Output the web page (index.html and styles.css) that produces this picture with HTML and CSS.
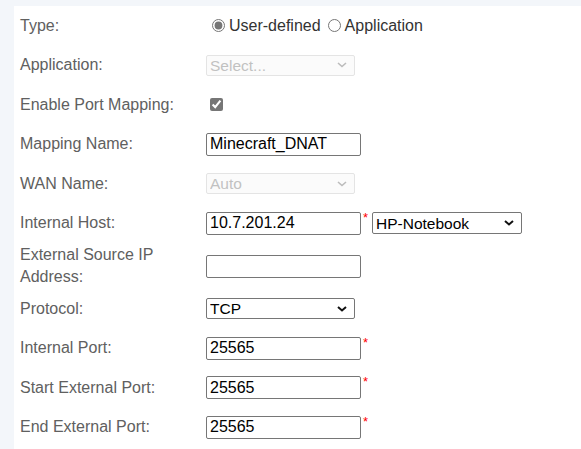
FILE: index.html
```html
<!DOCTYPE html>
<html lang="en">
<head>
    <meta charset="UTF-8">
    <meta name="viewport" content="width=device-width, initial-scale=1.0">
    <title>Port Mapping</title>
    <link rel="stylesheet" href="styles.css">
</head>
<body>
    <div class="panel">
        <form class="form-grid">
            <div class="row">
                <label class="field-label">Type:</label>
                <div class="field">
                    <label class="radio"><input type="radio" name="type" checked>User-defined</label>
                    <label class="radio"><input type="radio" name="type">Application</label>
                </div>
            </div>

            <div class="row">
                <label class="field-label">Application:</label>
                <div class="field">
                    <select class="select" disabled>
                        <option>Select...</option>
                    </select>
                </div>
            </div>

            <div class="row">
                <label class="field-label">Enable Port Mapping:</label>
                <div class="field">
                    <input type="checkbox" class="check" checked>
                </div>
            </div>

            <div class="row">
                <label class="field-label">Mapping Name:</label>
                <div class="field">
                    <input type="text" class="text" value="Minecraft_DNAT">
                </div>
            </div>

            <div class="row">
                <label class="field-label">WAN Name:</label>
                <div class="field">
                    <select class="select" disabled>
                        <option>Auto</option>
                    </select>
                </div>
            </div>

            <div class="row">
                <label class="field-label">Internal Host:</label>
                <div class="field">
                    <input type="text" class="text" value="10.7.201.24"><span class="req">*</span>
                    <select class="select host-select">
                        <option>HP-Notebook</option>
                    </select>
                </div>
            </div>

            <div class="row row-tall">
                <label class="field-label">External Source IP Address:</label>
                <div class="field">
                    <input type="text" class="text">
                </div>
            </div>

            <div class="row">
                <label class="field-label">Protocol:</label>
                <div class="field">
                    <select class="select">
                        <option>TCP</option>
                        <option>UDP</option>
                        <option>ALL</option>
                    </select>
                </div>
            </div>

            <div class="row">
                <label class="field-label">Internal Port:</label>
                <div class="field">
                    <input type="text" class="text" value="25565"><span class="req">*</span>
                </div>
            </div>

            <div class="row">
                <label class="field-label">Start External Port:</label>
                <div class="field">
                    <input type="text" class="text" value="25565"><span class="req">*</span>
                </div>
            </div>

            <div class="row">
                <label class="field-label">End External Port:</label>
                <div class="field">
                    <input type="text" class="text" value="25565"><span class="req">*</span>
                </div>
            </div>
        </form>
    </div>
</body>
</html>
```

FILE: styles.css
```css
html, body {
    margin: 0;
    height: 100%;
}
body {
    font-family: "Liberation Sans", Arial, sans-serif;
    font-size: 16px;
    background-color: #f3f6fa;
    overflow: hidden;
}
.panel {
    margin: 6px 0 0 14px;
    padding-left: 6px;
    background: white;
    height: calc(100% - 6px);
}
.form-grid {
    margin: 0;
}
.row {
    display: flex;
    align-items: center;
    height: 39.5px;
}
.row-tall {
    height: 46px;
}
.field-label {
    width: 186px;
    flex-shrink: 0;
    color: #606060;
    line-height: 22px;
    padding-right: 30px;
    box-sizing: border-box;
}
.field {
    display: flex;
    align-items: center;
}
.radio {
    display: flex;
    align-items: center;
    color: #333;
    margin-right: 1px;
}
.radio input {
    margin: 0 4px 0 6px;
    width: 13px;
    height: 13px;
    accent-color: #767676;
}
.check {
    margin: 0 0 0 4px;
    width: 13px;
    height: 13px;
    accent-color: #767676;
}
.text {
    width: 155px;
    height: 23px;
    box-sizing: border-box;
    border: 1px solid #767676;
    border-radius: 2px;
    padding: 1px 3px;
    font-family: inherit;
    font-size: 16px;
    color: #000;
    margin: 0;
    outline: none;
}
.select {
    appearance: none;
    -webkit-appearance: none;
    width: 149px;
    height: 21px;
    box-sizing: border-box;
    border: 1px solid #767676;
    border-radius: 2px;
    padding: 0 20px 0 3px;
    font-family: inherit;
    font-size: 15.5px;
    color: #000;
    margin: 0;
    background: white url("data:image/svg+xml,%3Csvg xmlns='http://www.w3.org/2000/svg' width='10' height='6' viewBox='0 0 10 6'%3E%3Cpath d='M1 1l4 3.5L9 1' fill='none' stroke='%23111' stroke-width='2'/%3E%3C/svg%3E") no-repeat right 7px center;
}
.select:disabled {
    border-color: #d9d9d9;
    background-color: #fafafa;
    color: #a8a8a8;
    background-image: url("data:image/svg+xml,%3Csvg xmlns='http://www.w3.org/2000/svg' width='10' height='6' viewBox='0 0 10 6'%3E%3Cpath d='M1 1l4 3.5L9 1' fill='none' stroke='%23a0a0a0' stroke-width='1.6'/%3E%3C/svg%3E");
}
.host-select {
    width: 150px;
    height: 22px;
    margin-left: 4px;
}
.req {
    color: #f00;
    font-size: 13px;
    align-self: flex-start;
    line-height: 12px;
    margin-left: 2px;
    width: 5px;
}
```
